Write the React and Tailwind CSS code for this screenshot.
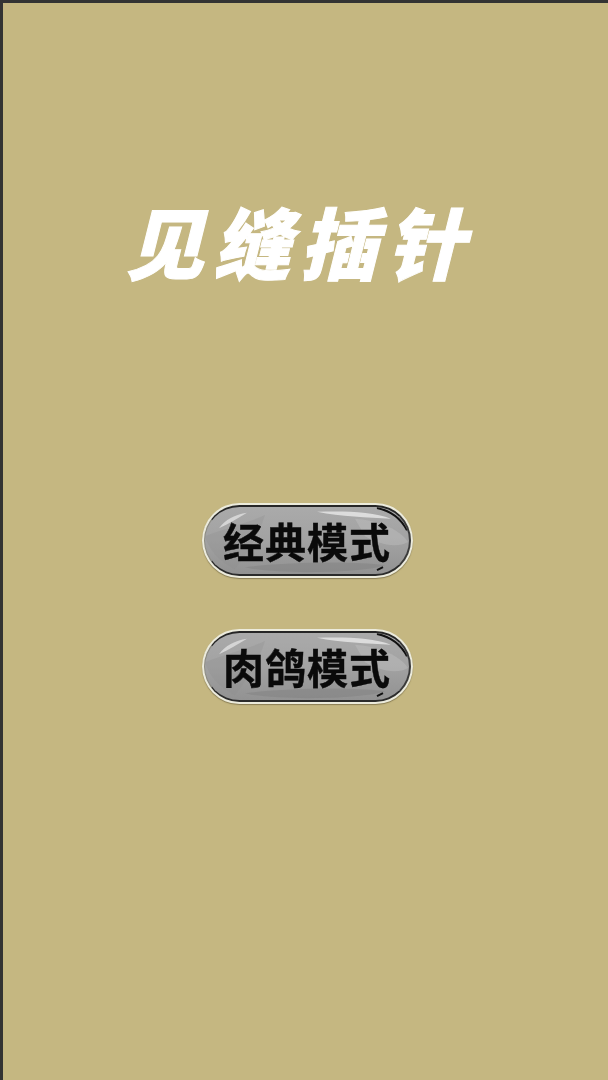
import React from "react";

const cjk = "font-['Noto_Sans_CJK_SC','Noto_Sans_CJK_JP',sans-serif]";

const GameButton = ({ label }) => (
	<button className="relative w-[211px] h-[75px] rounded-full bg-[#ecebdc] p-[2px] shadow-[0_1px_1px_rgba(80,70,40,0.5)]">
		<div className="relative w-full h-full rounded-full overflow-hidden border-t-2 border-r-2 border-b-2 border-l border-t-[#262626] border-r-[#3a3a3a] border-b-[#2b2b2b] border-l-[#8a8980] bg-gradient-to-b from-[#aaaaaa] via-[#a2a2a2] to-[#929292] flex items-center justify-center blur-[0.3px]">
			<svg className="absolute inset-0 w-full h-full" viewBox="0 0 204 69" preserveAspectRatio="none">
				<path d="M14 22 C20 13 30 8 42 6 C32 12 24 17 14 22 Z" fill="#e4e4e4" opacity="0.75" />
				<path d="M112 5 C140 4 168 5 186 12 C162 11 136 10 112 5 Z" fill="#e8e8e8" opacity="0.8" />
				<path d="M0 30 C20 22 50 14 60 8 C54 30 40 50 30 64 C14 56 4 44 0 30 Z" fill="#8f8f8f" opacity="0.3" />
				<path d="M150 12 C175 14 196 24 203 36 C190 44 170 36 160 30 Z" fill="#c2c2c2" opacity="0.4" />
				<path d="M40 62 C90 56 150 56 180 60 C160 68 70 70 40 62 Z" fill="#777777" opacity="0.35" />
				<path d="M172 1 C186 4 196 12 202 24" stroke="#111111" strokeWidth="2" fill="none" />
				<path d="M172 65 L178 62" stroke="#111111" strokeWidth="2" fill="none" />
			</svg>
			<span className={`relative ${cjk} text-[41px] leading-none font-bold text-[#0a0a0a] tracking-[1px] ml-[1px] [-webkit-text-stroke:0.4px_#0a0a0a]`}>
				{label}
			</span>
		</div>
	</button>
);

export default function App() {
	return (
		<div className="w-[608px] h-[1080px] bg-[#333333] pt-[3px] pl-[3px] overflow-hidden">
			<div className="w-full h-full bg-[#c5b781] flex flex-col items-center">
				<h1
					className={`mt-[192px] h-[92px] ${cjk} text-[78px] leading-[90px] font-black text-white italic whitespace-nowrap tracking-[9px] blur-[0.4px] mr-[12px] [-webkit-text-stroke:1px_#ffffff]`}
				>
					见缝插针
				</h1>
				<div className="mt-[216px] flex flex-col items-center gap-[51px] pl-[3px]">
					<GameButton label="经典模式" />
					<GameButton label="肉鸽模式" />
				</div>
			</div>
		</div>
	);
}
